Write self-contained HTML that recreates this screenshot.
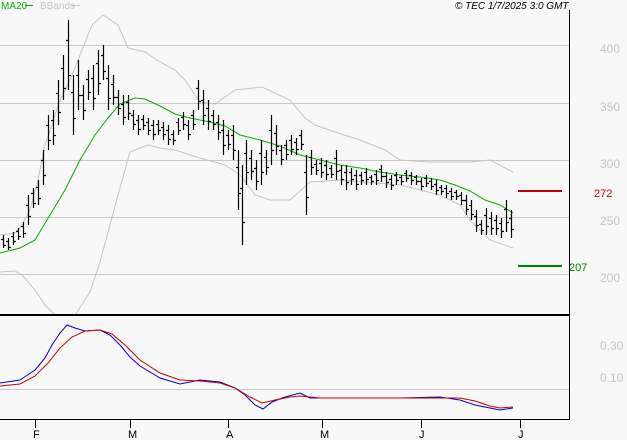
<!DOCTYPE html>
<html><head><meta charset="utf-8"><style>
html,body{margin:0;padding:0;background:#f8f8f8;}
body{width:627px;height:440px;overflow:hidden;position:relative;font-family:"Liberation Sans",sans-serif;}
</style></head><body>
<svg width="627" height="440" xmlns="http://www.w3.org/2000/svg" style="position:absolute;left:0;top:0">
<rect width="627" height="440" fill="#f8f8f8"/>
<g stroke="#c8c8c8" stroke-width="1">
<line x1="0" y1="45.5" x2="569" y2="45.5"/>
<line x1="0" y1="103.5" x2="569" y2="103.5"/>
<line x1="0" y1="160.5" x2="569" y2="160.5"/>
<line x1="0" y1="217.5" x2="569" y2="217.5"/>
<line x1="0" y1="274.5" x2="569" y2="274.5"/>
<line x1="0" y1="389.5" x2="569" y2="389.5"/>
</g>
<g font-size="12" fill="#c4c4c4" font-family="Liberation Sans,sans-serif">
<text x="600" y="53">400</text><text x="600" y="111">350</text><text x="600" y="168">300</text><text x="600" y="225">250</text><text x="600" y="282">200</text>
<text x="600" y="350">0.30</text><text x="600" y="382">0.10</text>
</g>
<text x="1" y="9" font-size="10" fill="#00b000">MA20</text><line x1="25" y1="5.5" x2="33" y2="5.5" stroke="#00b000"/>
<text x="40" y="9" font-size="10" fill="#c4c4c4">BBands</text><line x1="72" y1="5.5" x2="80" y2="5.5" stroke="#c4c4c4"/>
<text x="455" y="9" font-size="10" font-style="italic" fill="#000">© TEC 1/7/2025 3:0 GMT</text>
<path fill="none" stroke="#c4c4c4" stroke-width="1" d="M0 235L15 233L22 225L30 210L38 180L45 145L52 125L58 105L70 80L80 55L92 25L103 15L118 25L128 48L145 52L160 62L175 70L185 80L195 95L200 102L215 104L235 90L262 87L290 100L305 118L315 125L335 132L360 140L385 150L400 160L430 162L470 162L490 160L513 172"/>
<path fill="none" stroke="#c4c4c4" stroke-width="1" d="M0 272L15 271L22 275L35 290L45 305L55 315M75 315L90 292L100 262L110 225L118 195L130 152L140 148L148 145L160 148L175 150L200 158L225 165L240 175L255 195L270 200L290 200L310 182L340 180L400 185L440 195L460 205L470 220L490 240L513 248"/>
<polyline fill="none" stroke="#00b000" stroke-width="1" points="0,253 20,248 35,240 50,215 65,190 80,160 95,135 108,118 120,104 135,98 145,99 160,106 175,114 190,118 210,122 225,126 240,135 260,140 280,146 300,155 320,160 340,165 360,168 380,172 400,175 420,177 440,180 455,185 470,191 485,200 500,205 513,213"/>
<path fill="none" stroke="#000" stroke-width="1.2" d="M3.5 235V248M1 239.5h2M4 245.5h2M8.5 238V250M6 241.5h2M9 247.5h2M13.5 232V245M11 236.5h2M14 241.5h2M18.5 228V240M16 231.5h2M19 236.5h2M23.5 222V238M21 226.5h2M24 233.5h2M28.5 195V225M26 205.5h2M29 216.5h2M33.5 188V208M31 193.5h2M34 203.5h2M38.5 180V205M36 187.5h2M39 198.5h2M43.5 150V185M41 160.5h2M44 175.5h2M48.5 115V150M46 125.5h2M49 140.5h2M53.5 110V145M51 120.5h2M54 135.5h2M58.5 80V125M56 93.5h2M59 112.5h2M63.5 55V100M61 68.5h2M64 88.5h2M68.5 20V90M66 40.5h2M69 75.5h2M73.5 75V135M71 92.5h2M74 118.5h2M78.5 60V110M76 75.5h2M79 95.5h2M83.5 85V120M81 95.5h2M84 110.5h2M88.5 70V100M86 79.5h2M89 92.5h2M93.5 65V110M91 78.5h2M94 98.5h2M98.5 50V95M96 63.5h2M99 83.5h2M103.5 45V80M101 55.5h2M104 71.5h2M108.5 65V110M106 78.5h2M109 98.5h2M113.5 75V105M111 84.5h2M114 97.5h2M118.5 90V115M116 97.5h2M119 108.5h2M123.5 95V125M121 104.5h2M124 117.5h2M128.5 95V120M126 102.5h2M129 113.5h2M133.5 110V130M131 115.5h2M134 124.5h2M138.5 115V135M136 120.5h2M139 129.5h2M143.5 115V130M141 119.5h2M144 125.5h2M148.5 118V135M146 122.5h2M149 130.5h2M153.5 120V140M151 125.5h2M154 134.5h2M158.5 120V135M156 124.5h2M159 130.5h2M163.5 122V140M161 127.5h2M164 134.5h2M168.5 125V145M166 130.5h2M169 139.5h2M173.5 130V145M171 134.5h2M174 140.5h2M178.5 118V135M176 122.5h2M179 130.5h2M183.5 112V130M181 117.5h2M184 124.5h2M188.5 120V140M186 125.5h2M189 134.5h2M193.5 110V130M191 115.5h2M194 124.5h2M198.5 80V110M196 88.5h2M199 101.5h2M203.5 90V125M201 100.5h2M204 115.5h2M208.5 100V130M206 108.5h2M209 121.5h2M213.5 110V130M211 115.5h2M214 124.5h2M218.5 115V140M216 122.5h2M219 132.5h2M223.5 120V155M221 130.5h2M224 145.5h2M228.5 130V150M226 135.5h2M229 144.5h2M233.5 125V160M231 135.5h2M234 150.5h2M238.5 150V210M236 167.5h2M239 193.5h2M242.5 165V245M240 188.5h2M243 222.5h2M246.5 140V185M244 153.5h2M247 172.5h2M251.5 150V180M249 158.5h2M252 171.5h2M256.5 160V190M254 168.5h2M257 181.5h2M261.5 140V185M259 153.5h2M262 172.5h2M266.5 150V175M264 157.5h2M267 167.5h2M271.5 115V165M269 130.5h2M272 150.5h2M276.5 125V155M274 133.5h2M277 146.5h2M281.5 145V165M279 150.5h2M282 159.5h2M286.5 140V160M284 145.5h2M287 154.5h2M291.5 135V155M289 140.5h2M292 149.5h2M296.5 138V155M294 142.5h2M297 149.5h2M301.5 130V150M299 135.5h2M302 144.5h2M306.5 155V215M304 172.5h2M307 197.5h2M311.5 150V175M309 157.5h2M312 167.5h2M316.5 160V175M314 164.5h2M317 170.5h2M321.5 158V178M319 163.5h2M322 172.5h2M326.5 160V180M324 165.5h2M327 174.5h2M331.5 165V178M329 168.5h2M332 174.5h2M336.5 150V180M334 158.5h2M337 171.5h2M341.5 165V185M339 170.5h2M342 179.5h2M346.5 165V190M344 172.5h2M347 182.5h2M351.5 168V185M349 172.5h2M352 179.5h2M356.5 170V190M354 175.5h2M357 184.5h2M361.5 172V185M359 175.5h2M362 180.5h2M366.5 168V185M364 172.5h2M367 179.5h2M371.5 175V185M369 177.5h2M372 181.5h2M376.5 170V185M374 174.5h2M377 180.5h2M381.5 165V182M379 169.5h2M382 176.5h2M386.5 172V188M384 176.5h2M387 182.5h2M391.5 175V190M389 179.5h2M392 185.5h2M396.5 172V185M394 175.5h2M397 180.5h2M401.5 175V185M399 177.5h2M402 181.5h2M406.5 170V182M404 173.5h2M407 178.5h2M411.5 172V185M409 175.5h2M412 180.5h2M416.5 175V185M414 177.5h2M417 181.5h2M421.5 178V190M419 181.5h2M422 186.5h2M426.5 175V187M424 178.5h2M427 183.5h2M431.5 178V190M429 181.5h2M432 186.5h2M436.5 180V195M434 184.5h2M437 190.5h2M441.5 185V195M439 187.5h2M442 191.5h2M446.5 185V198M444 188.5h2M447 193.5h2M451.5 188V200M449 191.5h2M452 196.5h2M456.5 190V200M454 192.5h2M457 196.5h2M461.5 192V205M459 195.5h2M462 200.5h2M466.5 195V215M464 200.5h2M467 209.5h2M471.5 200V220M469 205.5h2M472 214.5h2M476.5 210V232M474 216.5h2M477 225.5h2M481.5 220V235M479 224.5h2M482 230.5h2M486.5 208V235M484 215.5h2M487 226.5h2M491.5 212V235M489 218.5h2M492 228.5h2M496.5 215V235M494 220.5h2M497 228.5h2M501.5 218V238M499 223.5h2M502 231.5h2M506.5 200V232M504 209.5h2M507 222.5h2M511.5 210V238M509 218.5h2M512 229.5h2"/>
<line x1="518" y1="191" x2="562" y2="191" stroke="#c00000" stroke-width="2"/>
<text x="594" y="197" font-size="11" fill="#c00000">272</text>
<line x1="518" y1="266" x2="562" y2="266" stroke="#008000" stroke-width="2"/>
<text x="569" y="271" font-size="11" fill="#008000">207</text>
<polyline fill="none" stroke="#0000cc" stroke-width="1" points="0,383 20,380 35,370 45,358 52,345 60,333 67,325 75,328 85,331 100,330 110,335 120,345 130,357 140,366 160,378 180,384 200,380 220,382 235,388 245,395 255,405 263,409 272,402 285,397 300,393 310,398 320,398 400,398 440,397 460,400 475,405 490,408 500,410 513,408"/>
<polyline fill="none" stroke="#cc0000" stroke-width="1" points="0,386 20,384 35,376 48,363 60,348 72,337 85,331 100,330 112,334 125,345 140,360 160,373 180,380 200,381 220,383 235,388 250,397 262,403 275,400 290,397 300,396 320,398 400,398 460,398 475,401 490,406 500,408 513,407"/>
<line x1="0" y1="315" x2="569" y2="315" stroke="#000" stroke-width="2"/>
<line x1="569.5" y1="10" x2="569.5" y2="419" stroke="#000" stroke-width="1"/>
<line x1="0" y1="419.5" x2="570" y2="419.5" stroke="#000" stroke-width="1"/>
<g stroke="#000"><line x1="35.5" y1="419" x2="35.5" y2="428"/><line x1="130.5" y1="419" x2="130.5" y2="428"/><line x1="228.5" y1="419" x2="228.5" y2="428"/><line x1="322.5" y1="419" x2="322.5" y2="428"/><line x1="421.5" y1="419" x2="421.5" y2="428"/><line x1="520.5" y1="419" x2="520.5" y2="428"/></g>
<g font-size="11" fill="#000"><text x="33" y="438">F</text><text x="128" y="438">M</text><text x="226" y="438">A</text><text x="320" y="438">M</text><text x="419" y="438">J</text><text x="518" y="438">J</text></g>
</svg>
</body></html>
